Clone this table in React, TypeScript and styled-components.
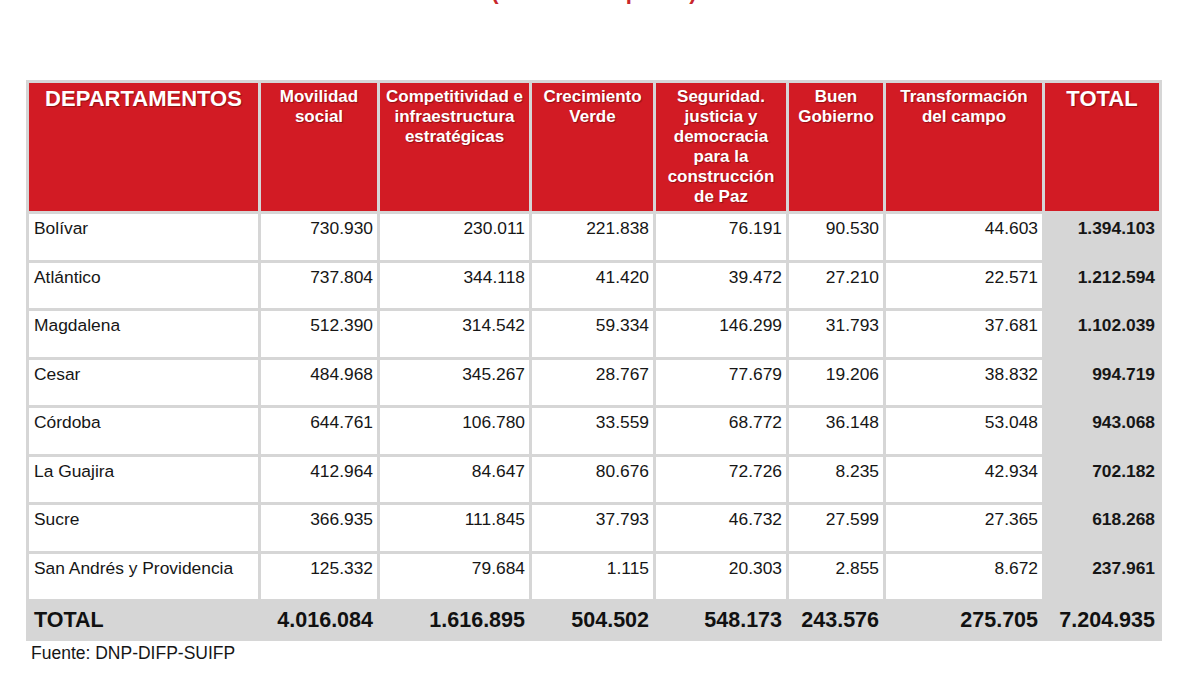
import React from "react";
import styled, { createGlobalStyle } from "styled-components";

const GlobalStyle = createGlobalStyle`
  html, body {
    margin: 0;
    padding: 0;
    background: #ffffff;
    overflow: hidden;
  }
  body {
    font-family: "Liberation Sans", Arial, sans-serif;
  }
`;

const Page = styled.div`
  width: 1200px;
  height: 675px;
  padding-left: 26px;
  box-sizing: border-box;
  display: flex;
  flex-direction: column;
  align-items: flex-start;
`;

const Title = styled.div`
  width: 1136px;
  margin-top: -19px;
  text-align: center;
  color: #c8262c;
  font-weight: bold;
  font-size: 22px;
  line-height: 22px;
`;

const Table = styled.table`
  margin-top: 77px;
  border-collapse: collapse;
  table-layout: fixed;
  width: 1133px;
  font-family: "Liberation Sans", Arial, sans-serif;
`;

const HeadCell = styled.th<{ $big?: boolean }>`
  background: #d21b24;
  color: #ffffff;
  border: 3px solid #d6d6d6;
  vertical-align: top;
  text-align: center;
  font-weight: bold;
  font-size: ${(p) => (p.$big ? "22px" : "17px")};
  line-height: ${(p) => (p.$big ? "24px" : "20px")};
  padding: 4px 2px 0;
  text-shadow: 1px 1px 1px rgba(60, 0, 0, 0.45);
  height: 131px;
  box-sizing: border-box;
`;

const BodyRow = styled.tr`
  height: 48.5px;
`;

const NameCell = styled.td`
  border: 3px solid #d6d6d6;
  background: #ffffff;
  color: #161616;
  font-size: 17.4px;
  line-height: 20px;
  vertical-align: top;
  text-align: left;
  padding: 4px 4px 0 5px;
  white-space: nowrap;
`;

const NumCell = styled.td<{ $total?: boolean }>`
  border: 3px solid #d6d6d6;
  background: ${(p) => (p.$total ? "#d6d6d6" : "#ffffff")};
  color: #161616;
  font-size: 17.4px;
  font-weight: ${(p) => (p.$total ? "bold" : "normal")};
  line-height: 20px;
  vertical-align: top;
  text-align: right;
  padding: 4px 4px 0 4px;
  white-space: nowrap;
`;

const TotalRow = styled.tr`
  height: 39px;
`;

const TotalCell = styled.td<{ $label?: boolean }>`
  border: 3px solid #d6d6d6;
  background: #d6d6d6;
  color: #111111;
  font-size: 21.5px;
  font-weight: bold;
  line-height: 24px;
  vertical-align: middle;
  text-align: ${(p) => (p.$label ? "left" : "right")};
  padding: 0 4px 0 ${(p) => (p.$label ? "5px" : "4px")};
  white-space: nowrap;
`;

const Source = styled.div`
  margin-top: 2px;
  padding-left: 5px;
  color: #161616;
  font-size: 17.5px;
  line-height: 20px;
`;

const widths = [232, 119, 152, 124, 133, 97, 159, 117];

const headers: { label: React.ReactNode; big?: boolean }[] = [
  { label: "DEPARTAMENTOS", big: true },
  { label: <>Movilidad<br />social</> },
  { label: <>Competitividad e<br />infraestructura<br />estratégicas</> },
  { label: <>Crecimiento<br />Verde</> },
  { label: <>Seguridad.<br />justicia y<br />democracia<br />para la<br />construcción<br />de Paz</> },
  { label: <>Buen<br />Gobierno</> },
  { label: <>Transformación<br />del campo</> },
  { label: "TOTAL", big: true },
];

const rows: string[][] = [
  ["Bolívar", "730.930", "230.011", "221.838", "76.191", "90.530", "44.603", "1.394.103"],
  ["Atlántico", "737.804", "344.118", "41.420", "39.472", "27.210", "22.571", "1.212.594"],
  ["Magdalena", "512.390", "314.542", "59.334", "146.299", "31.793", "37.681", "1.102.039"],
  ["Cesar", "484.968", "345.267", "28.767", "77.679", "19.206", "38.832", "994.719"],
  ["Córdoba", "644.761", "106.780", "33.559", "68.772", "36.148", "53.048", "943.068"],
  ["La Guajira", "412.964", "84.647", "80.676", "72.726", "8.235", "42.934", "702.182"],
  ["Sucre", "366.935", "111.845", "37.793", "46.732", "27.599", "27.365", "618.268"],
  ["San Andrés y Providencia", "125.332", "79.684", "1.115", "20.303", "2.855", "8.672", "237.961"],
];

const totals = ["TOTAL", "4.016.084", "1.616.895", "504.502", "548.173", "243.576", "275.705", "7.204.935"];

export default function App() {
  return (
    <>
      <GlobalStyle />
      <Page>
        <Title>(millones de pesos)</Title>
        <Table>
          <colgroup>
            {widths.map((w, i) => (
              <col key={i} style={{ width: w }} />
            ))}
          </colgroup>
          <thead>
            <tr>
              {headers.map((h, i) => (
                <HeadCell key={i} $big={h.big}>
                  {h.label}
                </HeadCell>
              ))}
            </tr>
          </thead>
          <tbody>
            {rows.map((r) => (
              <BodyRow key={r[0]}>
                <NameCell>{r[0]}</NameCell>
                {r.slice(1).map((v, i) => (
                  <NumCell key={i} $total={i === 6}>
                    {v}
                  </NumCell>
                ))}
              </BodyRow>
            ))}
            <TotalRow>
              {totals.map((v, i) => (
                <TotalCell key={i} $label={i === 0}>
                  {v}
                </TotalCell>
              ))}
            </TotalRow>
          </tbody>
        </Table>
        <Source>Fuente: DNP-DIFP-SUIFP</Source>
      </Page>
    </>
  );
}
